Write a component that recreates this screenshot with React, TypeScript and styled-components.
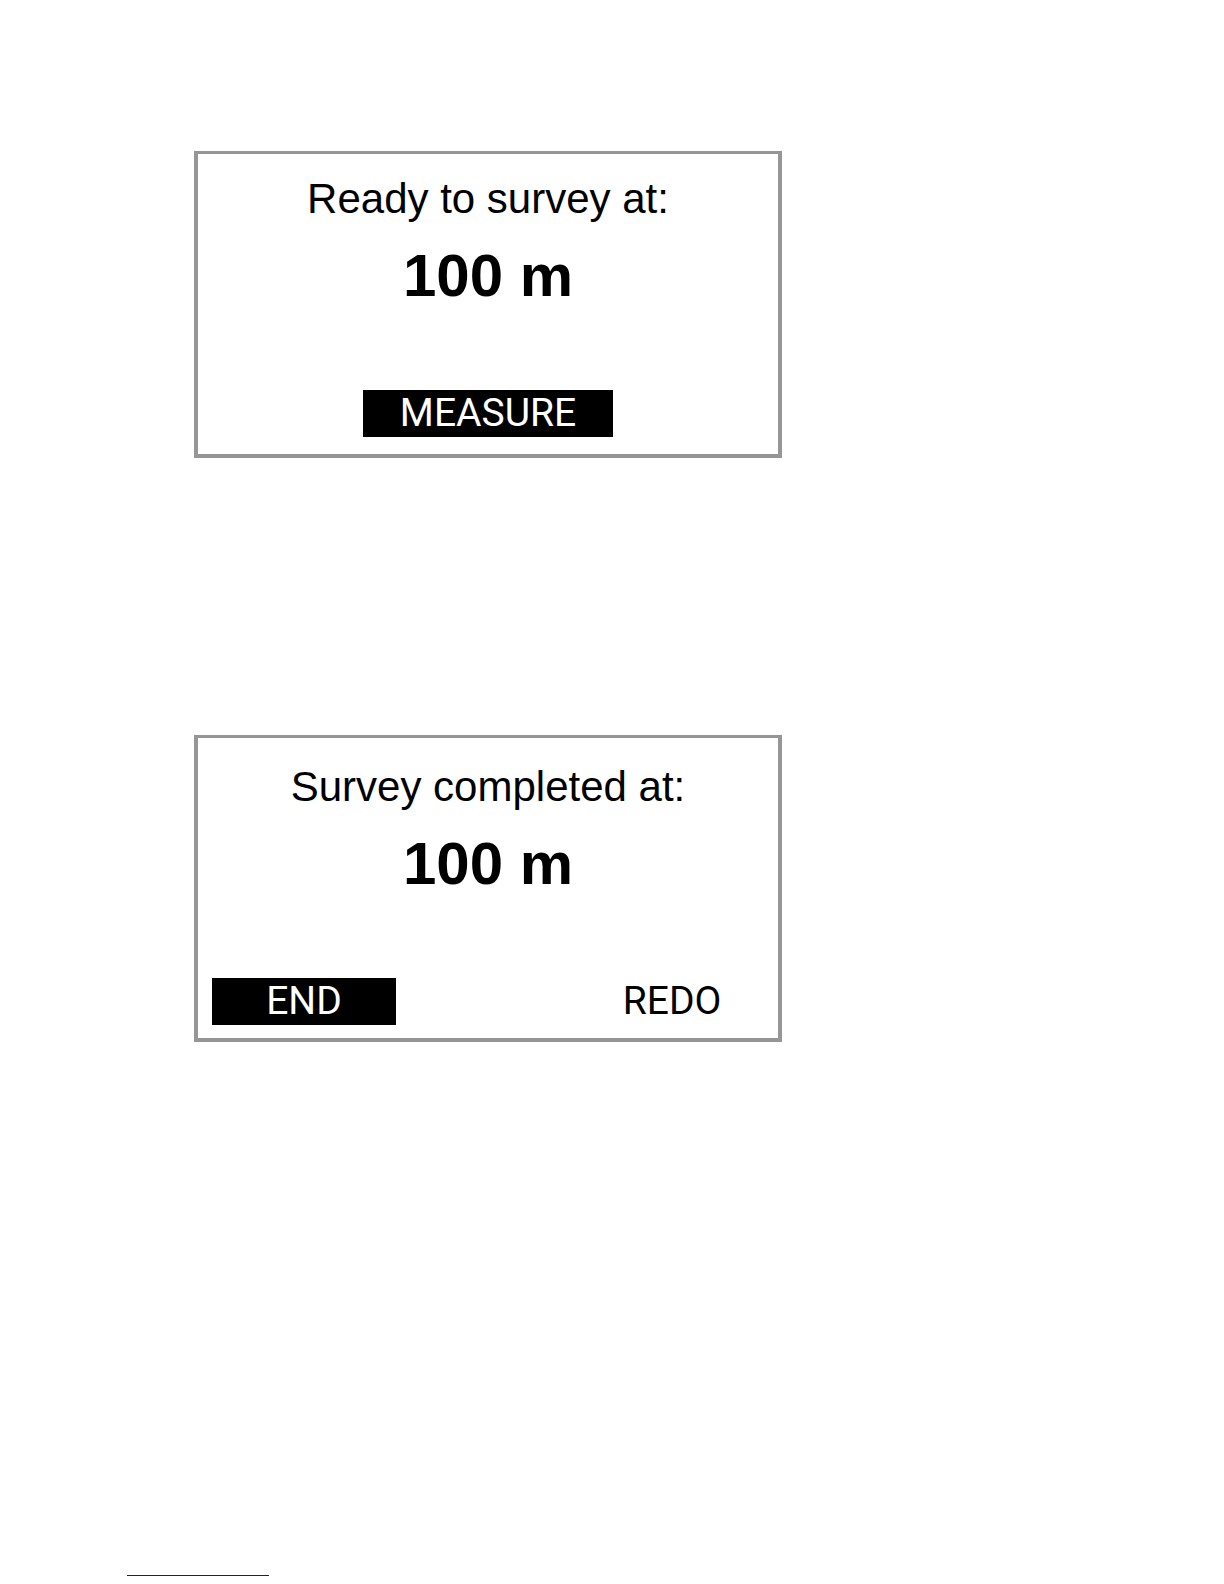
import React from "react";
import styled, { createGlobalStyle } from "styled-components";

const GlobalStyle = createGlobalStyle`
  * {
    box-sizing: border-box;
  }
  body {
    margin: 0;
    background: #fff;
    color: #000;
    font-family: "Liberation Sans", Arial, sans-serif;
  }
`;

const Page = styled.div`
  display: flex;
  flex-direction: column;
  min-height: 100vh;
  padding: 151px 127px 8px;
`;

const Screens = styled.main`
  display: flex;
  flex-direction: column;
  gap: 277px;
  padding: 0 67px 64px;
`;

const Screen = styled.section<{ $low?: boolean }>`
  display: flex;
  flex-direction: column;
  width: 100%;
  max-width: 588px;
  padding: ${(p) => (p.$low ? "25px 14px 13px" : "21px 14px 17px")};
  border: 4px solid #969696;
  border-top-width: 3px;
`;

const Prompt = styled.h2`
  margin: 0 0 21px;
  font-size: 42px;
  font-weight: 400;
  line-height: 48px;
  text-align: center;
`;

const Depth = styled.p`
  margin: 0 0 82px;
  font-size: 60px;
  font-weight: 700;
  line-height: 64px;
  text-align: center;
`;

const Actions = styled.div<{ $spread?: boolean }>`
  display: flex;
  justify-content: ${(p) => (p.$spread ? "space-between" : "center")};
`;

const Softkey = styled.button<{ $selected?: boolean; $wide?: boolean }>`
  width: ${(p) => (p.$wide ? "250px" : "184px")};
  height: 47px;
  padding: 0;
  border: 0;
  background: ${(p) => (p.$selected ? "#000" : "transparent")};
  color: ${(p) => (p.$selected ? "#fff" : "#000")};
  font-family: Roboto, sans-serif;
  font-size: 39px;
  font-weight: 400;
  line-height: 47px;
`;

const FooterRule = styled.hr`
  width: 142px;
  height: 1px;
  margin: auto 0 0;
  border: 0;
  background: #17177c;
`;

export default function App() {
  return (
    <>
      <GlobalStyle />
      <Page>
        <Screens>
          <Screen>
            <Prompt>Ready to survey at:</Prompt>
            <Depth>100 m</Depth>
            <Actions>
              <Softkey type="button" $selected $wide>MEASURE</Softkey>
            </Actions>
          </Screen>
          <Screen $low>
            <Prompt>Survey completed at:</Prompt>
            <Depth>100 m</Depth>
            <Actions $spread>
              <Softkey type="button" $selected>END</Softkey>
              <Softkey type="button">REDO</Softkey>
            </Actions>
          </Screen>
        </Screens>
        <FooterRule />
      </Page>
    </>
  );
}
